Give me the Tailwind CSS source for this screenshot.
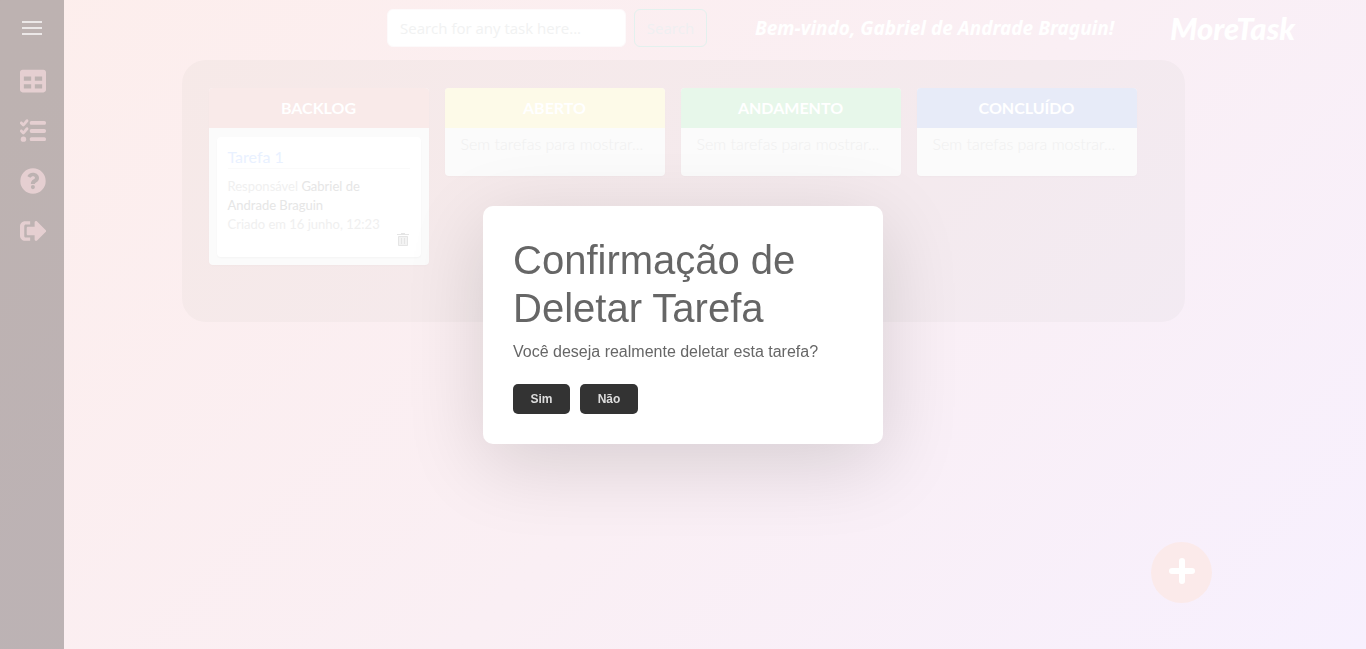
<!DOCTYPE html>
<html lang="pt-BR">
<head>
<meta charset="utf-8">
<meta name="viewport" content="width=device-width, initial-scale=1">
<title>MoreTask</title>
<script src="https://cdn.jsdelivr.net/npm/@tailwindcss/browser@4"></script>
</head>
<body class="min-h-screen flex bg-linear-135 from-[#fdeeec] via-[#faeff4] via-55% to-[#f7f0fe] font-['Lato',sans-serif]">

<aside class="w-16 shrink-0 flex flex-col items-center bg-black/25 text-[#e5cfd1]">
  <button type="button" aria-label="Menu" class="mt-[21px] h-[14px] w-5 flex flex-col justify-between">
    <span class="block h-[2px] w-5 bg-[#ece8e8]"></span>
    <span class="block h-[2px] w-5 bg-[#ece8e8]"></span>
    <span class="block h-[2px] w-5 bg-[#ece8e8]"></span>
  </button>
  <nav class="mt-[33px] pl-px flex flex-col gap-6">
    <a href="#" aria-label="Quadro" class="size-[26px]">
      <svg viewBox="0 0 512 512" class="size-full" fill="currentColor" fill-rule="evenodd"><path d="M50 32C22 32 0 54 0 82v348c0 28 22 50 50 50h412c28 0 50-22 50-50V82c0-28-22-50-50-50zM76 168h144v82H76zm216 0h144v82H292zM76 322h144v82H76zm216 0h144v82H292z"/></svg>
    </a>
    <a href="#" aria-label="Tarefas" class="size-[26px]">
      <svg viewBox="0 0 512 512" class="size-full" fill="currentColor"><path d="M156 32c12 11 13 29 3 41l-74 84c-5 6-12 9-20 9s-15-3-20-8L7 118c-10-11-10-29 0-40s29-10 40 0l17 18 52-60c10-12 28-14 40-4zm0 158c12 11 13 29 3 41l-74 84c-5 6-12 9-20 9s-15-3-20-8L7 276c-10-11-10-29 0-40s29-10 40 0l17 18 52-60c10-12 28-14 40-4z"/><path d="M192 96c0-24 14-38 32-38h256c18 0 32 14 32 38s-14 38-32 38H224c-18 0-32-14-32-38zm0 160c0-24 14-38 32-38h256c18 0 32 14 32 38s-14 38-32 38H224c-18 0-32-14-32-38zm0 160c0-24 14-38 32-38h256c18 0 32 14 32 38s-14 38-32 38H224c-18 0-32-14-32-38z"/><circle cx="68" cy="416" r="54"/></svg>
    </a>
    <a href="#" aria-label="Ajuda" class="size-[26px]">
      <svg viewBox="0 0 512 512" class="size-full" fill="currentColor" fill-rule="evenodd"><path d="M256 506a250 250 0 1 0 0-500 250 250 0 1 0 0 500zM146 160c18-40 55-66 106-66 68 0 122 42 122 102 0 42-24 68-58 88-18 11-22 16-22 32h-80c0-46 14-70 50-92 22-13 30-18 30-34 0-17-16-28-38-28-24 0-36 10-50 32zM214 376a40 40 0 1 1 80 0 40 40 0 1 1-80 0z"/></svg>
    </a>
    <a href="#" aria-label="Sair" class="size-[26px]">
      <svg viewBox="0 0 512 512" class="size-full" fill="currentColor"><path d="M200 64v64h-84c-20 0-32 12-32 32v192c0 20 12 32 32 32h84v64H100C44 448 0 404 0 348V164C0 108 44 64 100 64zM132 196c0-16 12-26 26-26h130V90c0-26 30-38 48-20l168 164c12 12 12 32 0 44L336 442c-18 18-48 6-48-20v-80H158c-14 0-26-10-26-26z"/></svg>
    </a>
  </nav>
</aside>

<main class="flex-1 min-w-0">
  <header class="flex items-center justify-end gap-12 h-[60px] pb-1 pr-[70px] font-['Open_Sans',sans-serif]">
    <form class="flex gap-2 w-80">
      <input type="search" aria-label="Search" placeholder="Search for any task here..." class="flex-1 min-w-0 h-[38px] px-3 rounded-md border border-[#fdfafb] bg-white text-[15px] placeholder:text-[#f1f2f2]">
      <button type="button" class="w-[73px] h-[38px] rounded-md border border-[#e3f1ee] text-[15px] text-[#eff0f1]">Search</button>
    </form>
    <p class="w-[367px] whitespace-nowrap text-[19px] font-bold italic text-white font-['Noto_Sans',sans-serif]">Bem-vindo, Gabriel de Andrade Braguin!</p>
    <a href="#" class="w-[126px] whitespace-nowrap text-[31px] leading-none font-black italic text-white font-['Lato',cursive]">MoreTask</a>
  </header>

  <div class="pr-16 flex justify-center">
    <section class="w-full max-w-[1003px] min-h-[262px] rounded-3xl bg-[#5f7f5f]/4 pl-[27px] pt-7 flex items-start gap-4 text-[#f0f0f0]">
      <section class="w-[220px] rounded-sm overflow-hidden bg-[#fbfbfb] shadow-[0_1px_2px_rgba(0,0,0,0.02)]">
        <h2 class="h-10 flex items-center justify-center bg-[#f9eae9] text-base font-bold text-white">BACKLOG</h2>
        <div class="px-2 pt-[9px] pb-2">
          <article class="h-[120px] rounded-sm bg-white shadow-[0_1px_2px_rgba(0,0,0,0.03)] px-[11px] pt-2">
            <h3 class="h-6 border-b border-[#fafafa] text-base leading-6 text-[#e9f1ff]">Tarefa 1</h3>
            <p class="mt-2 text-[13px] leading-[19px] text-[#f0f0f0]">Responsável <span class="text-[#e6e6e6]">Gabriel de</span><br><span class="text-[#e6e6e6]">Andrade Braguin</span><br>Criado em 16 junho, 12:23</p>
            <div class="flex justify-end pr-px">
              <button type="button" aria-label="Deletar tarefa" class="-mt-px w-3 h-[14px]">
                <svg viewBox="0 0 12 14" class="w-3 h-[14px]" fill="none" stroke="#e5e5e5"><path fill="#e5e5e5" stroke="none" d="M4 0h4v1h4v1H0V1h4z"/><path fill="#f3f3f3" d="M1.500 3.500h9v9h-9z"/><path d="M4.500 5v6M7.500 5v6"/></svg>
              </button>
            </div>
          </article>
        </div>
      </section>
      <section class="w-[220px] rounded-sm overflow-hidden bg-[#fbfbfb] shadow-[0_1px_2px_rgba(0,0,0,0.02)]">
        <h2 class="h-10 flex items-center justify-center bg-[#fdfae8] text-base font-bold text-white">ABERTO</h2>
        <p class="h-12 px-4 pt-1 text-base leading-6 font-light whitespace-nowrap">Sem tarefas para mostrar...</p>
      </section>
      <section class="w-[220px] rounded-sm overflow-hidden bg-[#fbfbfb] shadow-[0_1px_2px_rgba(0,0,0,0.02)]">
        <h2 class="h-10 flex items-center justify-center bg-[#e7f7ea] text-base font-bold text-white">ANDAMENTO</h2>
        <p class="h-12 px-4 pt-1 text-base leading-6 font-light whitespace-nowrap">Sem tarefas para mostrar...</p>
      </section>
      <section class="w-[220px] rounded-sm overflow-hidden bg-[#fbfbfb] shadow-[0_1px_2px_rgba(0,0,0,0.02)]">
        <h2 class="h-10 flex items-center justify-center bg-[#e7ebf8] text-base font-bold text-white">CONCLUÍDO</h2>
        <p class="h-12 px-4 pt-1 text-base leading-6 font-light whitespace-nowrap">Sem tarefas para mostrar...</p>
      </section>
    </section>
  </div>
</main>

<button type="button" aria-label="Adicionar tarefa" class="fixed right-[154px] bottom-[46px] size-[61px] rounded-full bg-[#fbeaea] flex justify-center pt-4">
  <svg viewBox="0 0 26 26" class="size-[26px]" stroke="white" stroke-width="6" stroke-linecap="round"><path d="M13 3v20M3 13h20"/></svg>
</button>

<div class="fixed inset-0 flex items-center justify-center p-4">
  <div role="dialog" aria-modal="true" aria-labelledby="dialog-title" class="w-[400px] rounded-[10px] bg-white p-[30px] text-[#666] font-['Liberation_Sans',sans-serif] shadow-[0_20px_80px_rgba(0,0,0,0.14)]">
    <h1 id="dialog-title" class="text-[40px] leading-[48px]">Confirmação de Deletar Tarefa</h1>
    <p class="mt-2 text-base leading-6">Você deseja realmente deletar esta tarefa?</p>
    <div class="mt-5 flex gap-[10px]">
      <button type="button" class="h-[30px] w-[57px] rounded-[5px] bg-[#333] text-xs font-bold text-[#ddd]">Sim</button>
      <button type="button" class="h-[30px] w-[58px] rounded-[5px] bg-[#333] text-xs font-bold text-[#ddd]">Não</button>
    </div>
  </div>
</div>
</body>
</html>
